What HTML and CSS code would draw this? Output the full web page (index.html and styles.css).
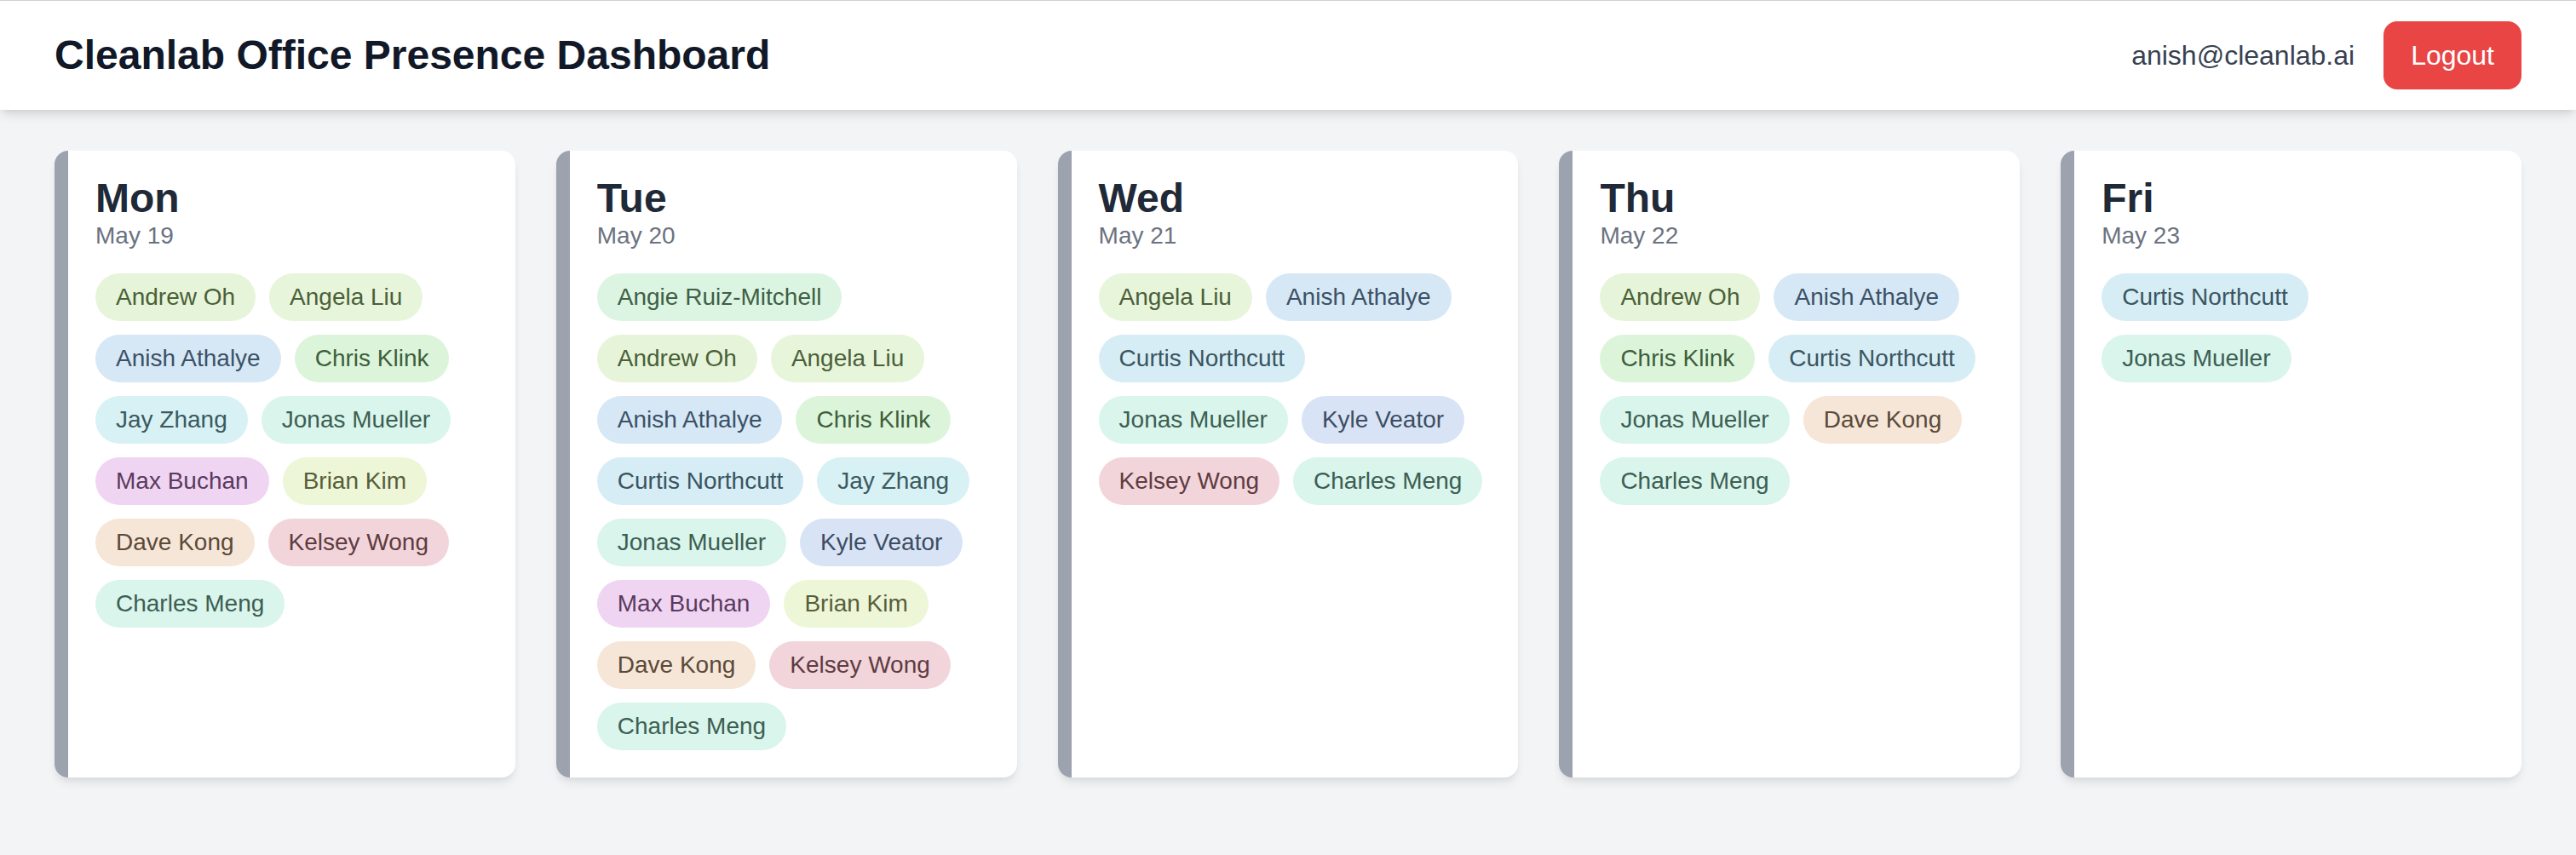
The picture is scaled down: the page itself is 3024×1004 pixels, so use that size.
FILE: index.html
```html
<!DOCTYPE html>
<html lang="en">
<head>
<meta charset="utf-8">
<title>Cleanlab Office Presence Dashboard</title>
<link rel="stylesheet" href="styles.css">
</head>
<body>
<header class="topbar">
  <h1 class="title">Cleanlab Office Presence Dashboard</h1>
  <div class="account">
    <span class="email">anish@cleanlab.ai</span>
    <button class="logout">Logout</button>
  </div>
</header>
<main class="week">
  <section class="day">
    <h2 class="day-name">Mon</h2>
    <div class="day-date">May 19</div>
    <div class="people">
      <span class="pill p-andrew">Andrew Oh</span>
      <span class="pill p-angela">Angela Liu</span>
      <span class="pill p-anish">Anish Athalye</span>
      <span class="pill p-chris">Chris Klink</span>
      <span class="pill p-jay">Jay Zhang</span>
      <span class="pill p-jonas">Jonas Mueller</span>
      <span class="pill p-max">Max Buchan</span>
      <span class="pill p-brian">Brian Kim</span>
      <span class="pill p-dave">Dave Kong</span>
      <span class="pill p-kelsey">Kelsey Wong</span>
      <span class="pill p-charles">Charles Meng</span>
    </div>
  </section>
  <section class="day">
    <h2 class="day-name">Tue</h2>
    <div class="day-date">May 20</div>
    <div class="people">
      <span class="pill p-angie">Angie Ruiz-Mitchell</span>
      <span class="pill p-andrew">Andrew Oh</span>
      <span class="pill p-angela">Angela Liu</span>
      <span class="pill p-anish">Anish Athalye</span>
      <span class="pill p-chris">Chris Klink</span>
      <span class="pill p-curtis">Curtis Northcutt</span>
      <span class="pill p-jay">Jay Zhang</span>
      <span class="pill p-jonas">Jonas Mueller</span>
      <span class="pill p-kyle">Kyle Veator</span>
      <span class="pill p-max">Max Buchan</span>
      <span class="pill p-brian">Brian Kim</span>
      <span class="pill p-dave">Dave Kong</span>
      <span class="pill p-kelsey">Kelsey Wong</span>
      <span class="pill p-charles">Charles Meng</span>
    </div>
  </section>
  <section class="day">
    <h2 class="day-name">Wed</h2>
    <div class="day-date">May 21</div>
    <div class="people">
      <span class="pill p-angela">Angela Liu</span>
      <span class="pill p-anish">Anish Athalye</span>
      <span class="pill p-curtis">Curtis Northcutt</span>
      <span class="pill p-jonas">Jonas Mueller</span>
      <span class="pill p-kyle">Kyle Veator</span>
      <span class="pill p-kelsey">Kelsey Wong</span>
      <span class="pill p-charles">Charles Meng</span>
    </div>
  </section>
  <section class="day">
    <h2 class="day-name">Thu</h2>
    <div class="day-date">May 22</div>
    <div class="people">
      <span class="pill p-andrew">Andrew Oh</span>
      <span class="pill p-anish">Anish Athalye</span>
      <span class="pill p-chris">Chris Klink</span>
      <span class="pill p-curtis">Curtis Northcutt</span>
      <span class="pill p-jonas">Jonas Mueller</span>
      <span class="pill p-dave">Dave Kong</span>
      <span class="pill p-charles">Charles Meng</span>
    </div>
  </section>
  <section class="day">
    <h2 class="day-name">Fri</h2>
    <div class="day-date">May 23</div>
    <div class="people">
      <span class="pill p-curtis">Curtis Northcutt</span>
      <span class="pill p-jonas">Jonas Mueller</span>
    </div>
  </section>
</main>
</body>
</html>
```
FILE: styles.css
```css
* { box-sizing: border-box; }

html, body {
  margin: 0;
  padding: 0;
}

body {
  min-height: 100vh;
  background: #f3f4f6;
  font-family: "Liberation Sans", Arial, sans-serif;
  color: #111827;
}

.topbar {
  position: relative;
  z-index: 1;
  display: flex;
  align-items: center;
  justify-content: space-between;
  padding: 24px 64px;
  background: #ffffff;
  border-top: 1px solid #d0d0d0;
  box-shadow: 0 8px 12px -2px rgba(0, 0, 0, 0.1), 0 4px 8px -4px rgba(0, 0, 0, 0.1);
}

.title {
  margin: 0;
  font-size: 48px;
  line-height: 64px;
  font-weight: 700;
  color: #111827;
}

.account {
  display: flex;
  align-items: center;
  gap: 34px;
}

.email {
  font-size: 32px;
  line-height: 48px;
  color: #374151;
}

.logout {
  border: none;
  background: #e94545;
  color: #ffffff;
  font-family: inherit;
  font-size: 32px;
  line-height: 48px;
  padding: 16px 32px;
  border-radius: 16px;
}

.week {
  display: grid;
  grid-template-columns: repeat(5, 1fr);
  gap: 48px;
  padding: 48px 64px;
}

.day {
  background: #ffffff;
  border-left: 16px solid #9ca3af;
  border-radius: 16px;
  padding: 32px;
  box-shadow: 0 8px 12px -2px rgba(0, 0, 0, 0.08), 0 4px 8px -4px rgba(0, 0, 0, 0.08);
}

.day-name {
  margin: 0;
  font-size: 48px;
  line-height: 48px;
  font-weight: 700;
  color: #1f2937;
}

.day-date {
  font-size: 28px;
  line-height: 40px;
  color: #6b7280;
}

.people {
  display: flex;
  flex-wrap: wrap;
  gap: 16px;
  margin-top: 24px;
}

.pill {
  display: inline-block;
  padding: 8px 24px;
  font-size: 28px;
  line-height: 40px;
  border-radius: 9999px;
  white-space: nowrap;
}

.p-angie   { background: #dbf5e2; color: #3f5f46; }
.p-andrew  { background: #e6f5d9; color: #4a6038; }
.p-angela  { background: #e7f5da; color: #4b5f3a; }
.p-anish   { background: #d6e8f5; color: #3b5166; }
.p-chris   { background: #dcf5da; color: #3e5e3c; }
.p-curtis  { background: #d7edf5; color: #3a5560; }
.p-jay     { background: #d8f1f5; color: #3a5a5e; }
.p-jonas   { background: #d9f5ec; color: #3d5e52; }
.p-kyle    { background: #d8e4f5; color: #3d4d63; }
.p-max     { background: #f0d5f3; color: #5a3a5e; }
.p-brian   { background: #eef6d8; color: #575e3a; }
.p-dave    { background: #f5e6d8; color: #5b4a38; }
.p-kelsey  { background: #f2d5da; color: #5e3c42; }
.p-charles { background: #d9f5ec; color: #3d5e52; }
```
